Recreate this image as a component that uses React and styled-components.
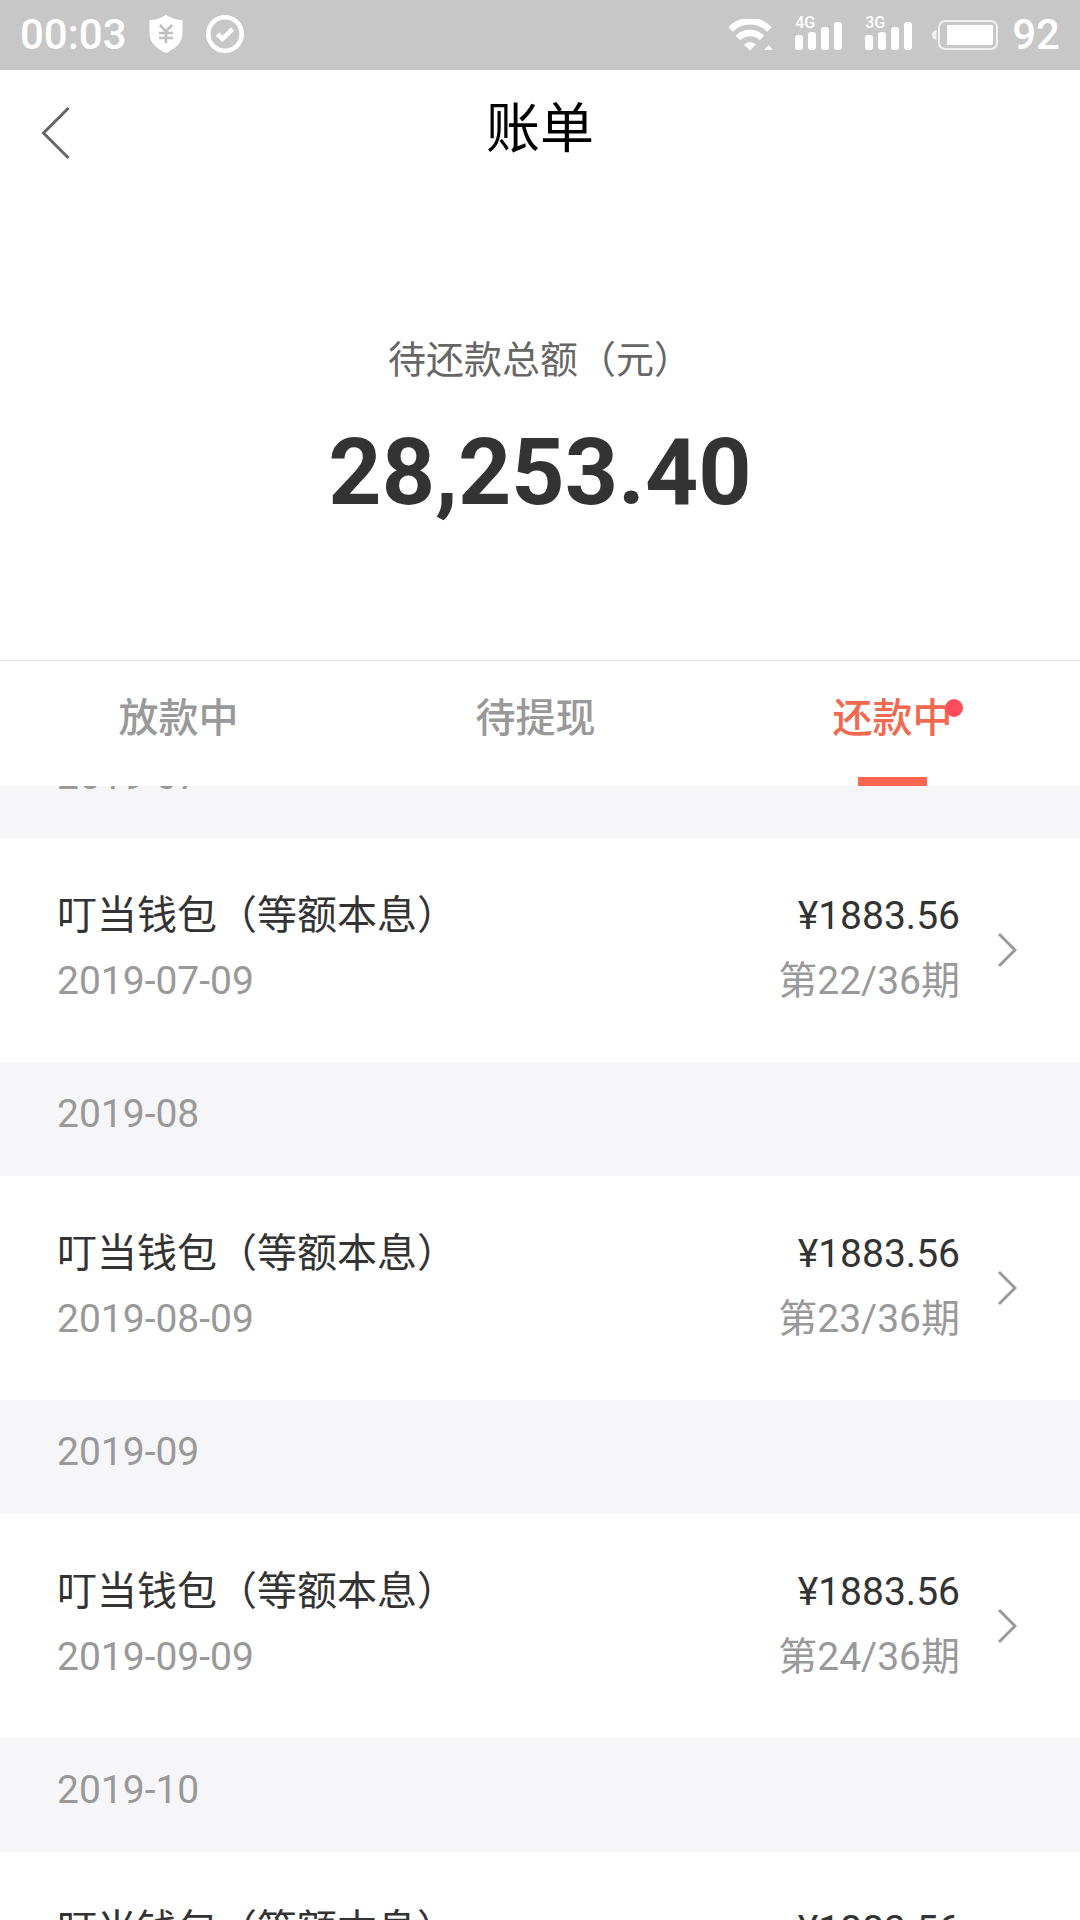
import React, { useLayoutEffect, useRef, useState } from 'react'
import styled, { createGlobalStyle } from 'styled-components'

const GlobalStyle = createGlobalStyle`
  * {
    box-sizing: border-box;
  }
  body {
    margin: 0;
    background: #fff;
    font-family: Roboto, "Noto Sans CJK SC", sans-serif;
    color: #333;
  }
`

const Page = styled.div`
  display: flex;
  flex-direction: column;
  height: 100vh;
  overflow: hidden;
`

const StatusBar = styled.div`
  display: flex;
  align-items: center;
  justify-content: space-between;
  height: 70px;
  padding: 0 20px;
  background: #c7c7c7;
  color: #fff;
  font-size: 42px;
  font-weight: 500;
  line-height: 66px;
`

const StatusGroup = styled.div`
  display: flex;
  align-items: center;
  gap: ${props => props.$gap}px;
  height: 66px;

  svg {
    display: block;
  }
`

const Signal = styled.div`
  position: relative;
`

const SignalLabel = styled.span`
  position: absolute;
  left: 0;
  top: -5px;
  font-size: 16px;
  line-height: 16px;
`

const TopBar = styled.header`
  display: grid;
  grid-template-columns: 120px 1fr 120px;
  height: 126px;
`

const BackButton = styled.button`
  display: flex;
  align-items: center;
  padding: 0 0 0 41px;
  border: 0;
  background: none;
  cursor: pointer;
`

const PageTitle = styled.h1`
  margin: 0;
  text-align: center;
  font-size: 54px;
  font-weight: 400;
  line-height: 120px;
  color: #000;
`

const Summary = styled.section`
  padding: 134px 0 128px;
  text-align: center;
  border-bottom: 1px solid #e5e5e5;
`

const SummaryLabel = styled.div`
  font-size: 38px;
  line-height: 60px;
  color: #666;
`

const SummaryAmount = styled.div`
  margin-top: 24px;
  font-size: 93px;
  font-weight: 700;
  line-height: 118px;
`

const Tabs = styled.div`
  display: grid;
  grid-template-columns: repeat(3, 1fr);
  height: 125px;
  padding-right: 9px;
  flex-shrink: 0;
`

const Tab = styled.button`
  display: flex;
  flex-direction: column;
  align-items: center;
  justify-content: space-between;
  padding: 0;
  border: 0;
  background: none;
  font-family: inherit;
  font-size: 40px;
  font-weight: 500;
  line-height: 116px;
  color: ${props => (props.$active ? '#f26950' : '#999')};
  cursor: pointer;
`

const TabText = styled.span`
  position: relative;
  height: 116px;
`

const Dot = styled.span`
  position: absolute;
  top: 38px;
  right: -10px;
  width: 18px;
  height: 18px;
  border-radius: 50%;
  background: #ff4d5e;
`

const Underline = styled.span`
  width: 69px;
  height: 9px;
  background: #ff654f;
`

const BillList = styled.main`
  flex: 1;
  min-height: 0;
  overflow-y: auto;
  scrollbar-width: none;
`

const Month = styled.h2`
  margin: 0;
  padding: 22px 57px 32px;
  background: #f6f6f9;
  color: #999;
  font-size: 39px;
  font-weight: 400;
  line-height: 60px;
`

const Bill = styled.a`
  display: flex;
  align-items: center;
  height: 224px;
  padding: 0 63px 0 57px;
  color: inherit;
  text-decoration: none;
`

const BillColumn = styled.div`
  display: flex;
  flex-direction: column;
  gap: 5px;
  flex: ${props => (props.$end ? 'none' : 1)};
  padding-bottom: 3px;
  text-align: ${props => (props.$end ? 'right' : 'left')};
  line-height: 60px;
`

const BillName = styled.span`
  font-size: 40px;
`

const BillAmount = styled.span`
  font-size: 39px;
`

const BillSub = styled.span`
  font-size: 39px;
  color: #999;
`

const Arrow = styled.svg`
  margin-left: 37px;
`

const tabs = ['放款中', '待提现', '还款中']

const bills = [
  { month: '2019-07', date: '2019-07-09', term: 22 },
  { month: '2019-08', date: '2019-08-09', term: 23 },
  { month: '2019-09', date: '2019-09-09', term: 24 },
  { month: '2019-10', date: '2019-10-09', term: 25 },
  { month: '2019-11', date: '2019-11-09', term: 26 },
]

const ShieldIcon = () => (
  <svg width="34" height="40" viewBox="0 0 34 40">
    <path d="M17 0 C12 3 6 5 0.500 5 V18 C0.500 28 8 34 17 38 C26 34 33.500 28 33.500 18 V5 C28 5 22 3 17 0 Z" fill="#fff" />
    <path d="M11 10 L17 16.500 L23 10 M10 18 H24 M10 23 H24 M17 16 V28" fill="none" stroke="#c0c0c0" strokeWidth="2.600" />
  </svg>
)

const CheckIcon = () => (
  <svg width="40" height="40" viewBox="0 1 40 40" fill="none" stroke="#fff">
    <circle cx="20" cy="20" r="16.700" strokeWidth="4.600" />
    <path d="M12.500 20 L17.500 25 L27.500 15" strokeWidth="4.600" />
  </svg>
)

const WifiIcon = () => (
  <svg width="44" height="32" viewBox="0 1 44 32">
    <path d="M1.500 11.500 A27 27 0 0 1 40.500 11.500" fill="none" stroke="#fff" strokeWidth="6.500" />
    <path d="M9 20 A17 17 0 0 1 33 20" fill="none" stroke="#fff" strokeWidth="6.500" />
    <path d="M15 26.500 Q21 21.500 27 26.500 L21 32.500 Z" fill="#fff" />
    <path d="M35 32 L39.500 27 L44 32 Z" fill="#fff" />
  </svg>
)

const SignalIcon = ({ label }) => (
  <Signal>
    <SignalLabel>{label}</SignalLabel>
    <svg width="48" height="30" viewBox="0 0 48 30" fill="#fff">
      <rect x="0" y="15" width="8" height="15" rx="3" />
      <rect x="13" y="12" width="8" height="18" rx="3" />
      <rect x="26" y="7" width="8" height="23" rx="3" />
      <rect x="39" y="2" width="8" height="28" rx="3" />
    </svg>
  </Signal>
)

const BatteryIcon = () => (
  <svg width="66" height="32" viewBox="0 0 66 32">
    <path d="M4.500 11 Q0 12 0 16 Q0 20 4.500 21 Z" fill="#f0f0f0" />
    <rect x="7" y="2" width="58" height="28" rx="6" fill="none" stroke="#f0f0f0" strokeWidth="2" />
    <rect x="15" y="6" width="46" height="20" rx="1" fill="#fff" />
  </svg>
)

const App = () => {
  const [active, setActive] = useState(2)
  const listRef = useRef(null)

  // start part-way through the first month
  useLayoutEffect(() => {
    listRef.current.scrollTop = 62
  }, [])

  return (
    <Page>
      <GlobalStyle />
      <StatusBar>
        <StatusGroup $gap={22}>
          <span>00:03</span>
          <ShieldIcon />
          <CheckIcon />
        </StatusGroup>
        <StatusGroup $gap={19}>
          <StatusGroup $gap={22}>
            <WifiIcon />
            <SignalIcon label="4G" />
            <SignalIcon label="3G" />
          </StatusGroup>
          <StatusGroup $gap={14}>
            <BatteryIcon />
            <span>92</span>
          </StatusGroup>
        </StatusGroup>
      </StatusBar>
      <TopBar>
        <BackButton aria-label="返回">
          <svg width="30" height="54" viewBox="0 0 30 54" fill="none" stroke="#666" strokeWidth="3">
            <path d="M27.500 2 L2.500 27 L27.500 52" />
          </svg>
        </BackButton>
        <PageTitle>账单</PageTitle>
      </TopBar>
      <Summary>
        <SummaryLabel>待还款总额（元）</SummaryLabel>
        <SummaryAmount>28,253.40</SummaryAmount>
      </Summary>
      <Tabs role="tablist">
        {tabs.map((name, i) => (
          <Tab key={name} role="tab" aria-selected={i === active} $active={i === active} onClick={() => setActive(i)}>
            <TabText>
              {name}
              {i === 2 && <Dot />}
            </TabText>
            {i === active && <Underline />}
          </Tab>
        ))}
      </Tabs>
      <BillList ref={listRef}>
        {bills.map(bill => (
          <section key={bill.month}>
            <Month>{bill.month}</Month>
            <Bill href={`#${bill.date}`}>
              <BillColumn>
                <BillName>叮当钱包（等额本息）</BillName>
                <BillSub>{bill.date}</BillSub>
              </BillColumn>
              <BillColumn $end>
                <BillAmount>¥1883.56</BillAmount>
                <BillSub>第{bill.term}/36期</BillSub>
              </BillColumn>
              <Arrow width="20" height="36" viewBox="0 0 20 36" fill="none" stroke="#999" strokeWidth="3">
                <path d="M2 2 L18 18 L2 34" />
              </Arrow>
            </Bill>
          </section>
        ))}
      </BillList>
    </Page>
  )
}

export default App
